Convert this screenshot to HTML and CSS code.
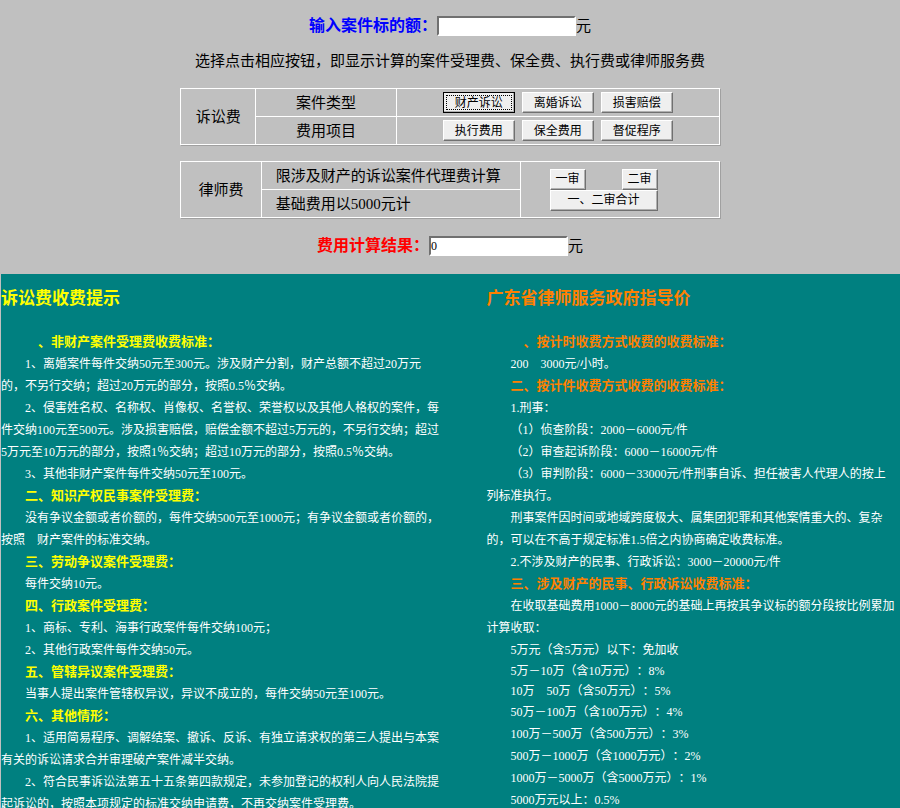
FILE: index.html
```html
<!DOCTYPE html>
<html lang="zh-CN">

<head>
  <meta charset="UTF-8">
  <meta name="viewport" content="width=device-width, initial-scale=1.0">
  <title>诉讼费计算</title>
  <link rel="stylesheet" href="styles.css">
</head>

<body>
  <!-- 计算器 -->
  <form class="calc">
    <p class="row">
      <label for="amount" class="in">输入案件标的额：</label>
      <input type="text" id="amount">
      <span>元</span>
    </p>
    <p class="row">选择点击相应按钮，即显示计算的案件受理费、保全费、执行费或律师服务费</p>

    <table class="court">
      <tr>
        <th rowspan="2" class="name">诉讼费</th>
        <td class="type">案件类型</td>
        <td>
          <div class="btns">
            <button type="button" class="active">财产诉讼</button>
            <button type="button">离婚诉讼</button>
            <button type="button">损害赔偿</button>
          </div>
        </td>
      </tr>
      <tr>
        <td class="type">费用项目</td>
        <td>
          <div class="btns">
            <button type="button">执行费用</button>
            <button type="button">保全费用</button>
            <button type="button">督促程序</button>
          </div>
        </td>
      </tr>
    </table>

    <table class="lawyer">
      <tr>
        <th rowspan="2" class="name">律师费</th>
        <td class="note">限涉及财产的诉讼案件代理费计算</td>
        <td rowspan="2">
          <div class="trial">
            <button type="button">一审</button>
            <button type="button">二审</button>
            <button type="button" class="both">一、二审合计</button>
          </div>
        </td>
      </tr>
      <tr>
        <td class="note">基础费用以5000元计</td>
      </tr>
    </table>

    <p class="row">
      <label for="result" class="out">费用计算结果：</label>
      <input type="text" id="result" value="0">
      <span>元</span>
    </p>
  </form>

  <!-- 收费说明 -->
  <div class="info">
    <div class="left">
      <h2>诉讼费收费提示</h2>
      <h3>　、非财产案件受理费收费标准：</h3>
      <p>1、离婚案件每件交纳50元至300元。涉及财产分割，财产总额不超过20万元的，不另行交纳；超过20万元的部分，按照0.5％交纳。</p>
      <p>2、侵害姓名权、名称权、肖像权、名誉权、荣誉权以及其他人格权的案件，每件交纳100元至500元。涉及损害赔偿，赔偿金额不超过5万元的，不另行交纳；超过5万元至10万元的部分，按照1％交纳；超过10万元的部分，按照0.5％交纳。</p>
      <p>3、其他非财产案件每件交纳50元至100元。</p>
      <h3>二、知识产权民事案件受理费：</h3>
      <p>没有争议金额或者价额的，每件交纳500元至1000元；有争议金额或者价额的，按照　财产案件的标准交纳。</p>
      <h3>三、劳动争议案件受理费：</h3>
      <p>每件交纳10元。</p>
      <h3>四、行政案件受理费：</h3>
      <p>1、商标、专利、海事行政案件每件交纳100元；</p>
      <p>2、其他行政案件每件交纳50元。</p>
      <h3>五、管辖异议案件受理费：</h3>
      <p>当事人提出案件管辖权异议，异议不成立的，每件交纳50元至100元。</p>
      <h3>六、其他情形：</h3>
      <p>1、适用简易程序、调解结案、撤诉、反诉、有独立请求权的第三人提出与本案有关的诉讼请求合并审理破产案件减半交纳。</p>
      <p>2、符合民事诉讼法第五十五条第四款规定，未参加登记的权利人向人民法院提起诉讼的，按照本项规定的标准交纳申请费，不再交纳案件受理费。</p>
    </div>

    <div class="right">
      <h2>广东省律师服务政府指导价</h2>
      <h3>　、按计时收费方式收费的收费标准：</h3>
      <p>200　3000元/小时。</p>
      <h3>二、按计件收费方式收费的收费标准：</h3>
      <p>1.刑事：</p>
      <p>（1）侦查阶段：2000－6000元/件</p>
      <p>（2）审查起诉阶段：6000－16000元/件</p>
      <p>（3）审判阶段：6000－33000元/件刑事自诉、担任被害人代理人的按上列标准执行。</p>
      <p>刑事案件因时间或地域跨度极大、属集团犯罪和其他案情重大的、复杂的，可以在不高于规定标准1.5倍之内协商确定收费标准。</p>
      <p>2.不涉及财产的民事、行政诉讼：3000－20000元/件</p>
      <h3>三、涉及财产的民事、行政诉讼收费标准：</h3>
      <p>在收取基础费用1000－8000元的基础上再按其争议标的额分段按比例累加计算收取：</p>
      <p>5万元（含5万元）以下：免加收</p>
      <p class="tight">5万－10万（含10万元）：8%</p>
      <p class="tight">10万　50万（含50万元）：5%</p>
      <p>50万－100万（含100万元）：4%</p>
      <p>100万－500万（含500万元）：3%</p>
      <p>500万－1000万（含1000万元）：2%</p>
      <p>1000万－5000万（含5000万元）：1%</p>
      <p>5000万元以上：0.5%</p>
    </div>
  </div>
</body>

</html>
```
FILE: styles.css
```css
* {
  margin: 0;
  padding: 0;
  box-sizing: border-box;
}

body {
  background-color: #c0c0c0;
  font: 15px/22px "Liberation Serif", "Noto Sans CJK SC", sans-serif;
  /* 标点保持全角宽度 */
  text-spacing-trim: space-all;
  color: #000;
}

.calc {
  display: flex;
  flex-direction: column;
  align-items: center;
  padding: 15px 0 17px;
}

.row {
  display: flex;
  align-items: center;
  justify-content: center;
  min-height: 22px;
}

.row + .row {
  margin-top: 13px;
}

.row label {
  font-size: 16px;
  font-weight: bold;
}

.in {
  color: #00f;
}

.out {
  color: #f00;
}

.row input {
  width: 139px;
  height: 20px;
  border: 2px solid;
  border-color: #707070 #fff #fff #707070;
  background-color: #fff;
  font: inherit;
  font-size: 12px;
}

table {
  width: 60%;
  margin: 16px 0 0;
  border-collapse: collapse;
  table-layout: fixed;
  border: 1px solid #fff;
  box-shadow: 1px 1px 0 #a0a0a0;
}

.lawyer + .row {
  margin-top: 17px;
}

td,
th {
  height: 28px;
  border: 1px solid #fff;
  font-weight: normal;
  text-align: center;
}

.name {
  width: 14%;
}

.type {
  width: 26%;
}

.lawyer .name {
  width: 15%;
}

.note {
  width: 48%;
  padding-left: 14px;
  text-align: left;
}

.btns {
  display: flex;
  justify-content: center;
  gap: 7px;
}

button {
  width: 72px;
  height: 21px;
  border: 1px solid;
  border-color: #fff #707070 #707070 #fff;
  box-shadow: inset -1px -1px 0 #b0b0b0;
  background-color: #efefef;
  font: inherit;
  font-size: 12px;
  line-height: 18px;
  color: #000;
}

button.active {
  border-color: #000;
  outline: 1px dotted #000;
  outline-offset: -4px;
}

.trial {
  display: flex;
  flex-wrap: wrap;
  justify-content: space-between;
  width: 108px;
  margin-left: 29px;
}

.trial button {
  width: 36px;
}

.trial .both {
  width: 108px;
}

.info {
  display: grid;
  grid-template-columns: 54% 46%;
  padding-top: 14px;
  border-left: 1px solid #c0c0c0;
  background-color: #008080;
  color: #fff;
  font-size: 12px;
}

.left {
  padding-right: 44px;
}

.right {
  padding-right: 4px;
}

h2 {
  margin-bottom: 21px;
  font-size: 17px;
  line-height: 22px;
}

h3 {
  font-size: 13px;
  line-height: 22px;
  padding-left: 24px;
}

.info p {
  text-indent: 24px;
}

.info .tight {
  line-height: 20px;
}

.left h2,
.left h3 {
  color: #ff0;
}

.right h2,
.right h3 {
  color: #ff8000;
}
```
